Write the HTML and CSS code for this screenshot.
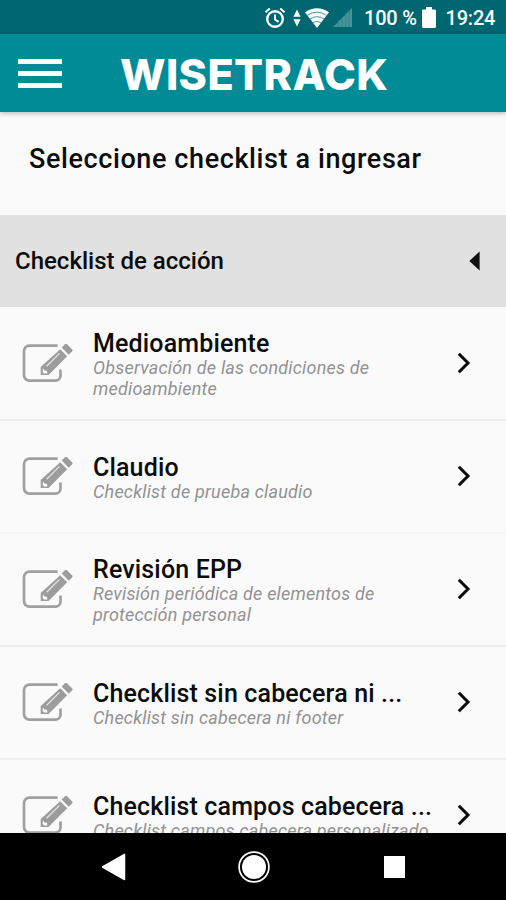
FILE: index.html
```html
<!DOCTYPE html>
<html lang="es">

<head>
    <meta charset="UTF-8">
    <meta name="viewport" content="width=device-width, initial-scale=1.0">
    <title>WISETRACK</title>
    <link rel="stylesheet" href="styles.css">
</head>

<body>
    <!-- icons shared by every row -->
    <svg class="sprite" width="0" height="0">
        <symbol id="icon-edit" viewBox="20 340 54 46">
            <path d="M57.6 345.6H29.5a5.5 5.5 0 0 0-5.5 5.5v24a5.5 5.5 0 0 0 5.5 5.5h26a5 5 0 0 0 5-5v-6.2" fill="none" stroke="#a0a0a0" stroke-width="2.7" />
            <path d="M61.7 347.6l3.4-3.4a1.3 1.3 0 0 1 1.8 0l5.3 5.2a1.3 1.3 0 0 1 0 1.8l-3.5 3.5z" fill="#9c9c9c" />
            <path d="M60.2 349.2l7 7-18.7 18.7h-7.8v-7.8z" fill="#9c9c9c" />
            <path d="M43 368.2l1.4 2.4 2.6.2.4 2.8H44l-1.4-1.5z" fill="#fafafa" />
            <path d="M46.6 366.2l12.9-12.8" fill="none" stroke="#e6e6e6" stroke-width="1.2" />
        </symbol>
        <symbol id="icon-chevron" viewBox="0 0 14 22">
            <path d="M1.8 1.8L11 11l-9.2 9.2" fill="none" stroke="#0a0a0a" stroke-width="3" />
        </symbol>
    </svg>

    <div class="screen">
        <div class="status-bar">
            <svg class="alarm" width="22" height="22" viewBox="0 0 22 22">
                <circle cx="11" cy="12" r="7.8" fill="none" stroke="#fff" stroke-width="2.4" />
                <path d="M11 7.5v5l3.6 2.3M1.4 5.2L5.8 1.5M20.6 5.2L16.2 1.5" fill="none" stroke="#fff" stroke-width="2" />
            </svg>
            <svg class="data" width="8" height="18" viewBox="0 0 8 18">
                <path d="M4 .6l3.6 7.2H.4zM4 17.4l3.6-7.2H.4z" fill="#fff" />
            </svg>
            <svg class="wifi" width="24" height="20" viewBox="0 0 24 20">
                <path d="M0 4.2Q12-3.6 24 4.2L12 20z" fill="#fff" />
                <path d="M2.4 7.2Q12 1.2 21.6 7.2M5 11Q12 6.4 19 11M8 14.6q4-2.6 8 0" fill="none" stroke="#006770" stroke-width=".7" />
            </svg>
            <svg class="signal" width="19" height="19" viewBox="0 0 19 19">
                <path d="M19 0v19H0z" fill="#48949a" />
                <path d="M5.3 12v7M9 9v10M12.7 5v14M16.2 2v17" stroke="#2a8087" stroke-width=".8" />
            </svg>
            <span class="percent">100 %</span>
            <svg class="battery" width="14" height="21" viewBox="0 0 14 21">
                <path d="M4 0h6v2.4h2.5A1.5 1.5 0 0 1 14 4v15.5a1.5 1.5 0 0 1-1.5 1.5h-11A1.5 1.5 0 0 1 0 19.5V4a1.5 1.5 0 0 1 1.5-1.6H4z" fill="#fff" />
            </svg>
            <span class="clock">19:24</span>
        </div>

        <div class="app-bar">
            <div class="menu">
                <span></span>
                <span></span>
                <span></span>
            </div>
            <div class="brand">WISETRACK</div>
        </div>

        <h1 class="page-title">Seleccione checklist a ingresar</h1>

        <div class="section">
            <span class="section-name">Checklist de acción</span>
            <svg width="11" height="20" viewBox="0 0 11 20">
                <path d="M10.6.5v19L.3 10z" fill="#111" />
            </svg>
        </div>

        <div class="list">
            <div class="item">
                <svg class="edit"><use href="#icon-edit" /></svg>
                <div class="text">
                    <div class="name">Medioambiente</div>
                    <div class="desc">Observación de las condiciones de<br>medioambiente</div>
                </div>
                <svg class="chevron"><use href="#icon-chevron" /></svg>
            </div>
            <div class="item light">
                <svg class="edit"><use href="#icon-edit" /></svg>
                <div class="text">
                    <div class="name">Claudio</div>
                    <div class="desc">Checklist de prueba claudio</div>
                </div>
                <svg class="chevron"><use href="#icon-chevron" /></svg>
            </div>
            <div class="item">
                <svg class="edit"><use href="#icon-edit" /></svg>
                <div class="text">
                    <div class="name">Revisión EPP</div>
                    <div class="desc">Revisión periódica de elementos de<br>protección personal</div>
                </div>
                <svg class="chevron"><use href="#icon-chevron" /></svg>
            </div>
            <div class="item">
                <svg class="edit"><use href="#icon-edit" /></svg>
                <div class="text">
                    <div class="name">Checklist sin cabecera ni ...</div>
                    <div class="desc">Checklist sin cabecera ni footer</div>
                </div>
                <svg class="chevron"><use href="#icon-chevron" /></svg>
            </div>
            <div class="item">
                <svg class="edit"><use href="#icon-edit" /></svg>
                <div class="text">
                    <div class="name">Checklist campos cabecera ...</div>
                    <div class="desc">Checklist campos cabecera personalizado</div>
                </div>
                <svg class="chevron"><use href="#icon-chevron" /></svg>
            </div>
        </div>

        <div class="nav-bar">
            <svg class="back" width="25" height="28" viewBox="0 0 25 28">
                <path d="M23.5 1.4v25.2L1.5 14z" fill="#fff" stroke="#fff" stroke-width="1.5" stroke-linejoin="round" />
            </svg>
            <svg class="home" width="32" height="32" viewBox="0 0 32 32">
                <circle cx="16" cy="16" r="14.9" fill="none" stroke="#fff" stroke-width="1.7" />
                <circle cx="16" cy="16" r="12" fill="#fff" />
            </svg>
            <div class="recent"></div>
        </div>
    </div>
</body>

</html>
```
FILE: styles.css
```css
body {
    margin: 0;
    padding: 0;
    background: #fafafa;
    color: #0c0c0c;
    font-family: Roboto, "Liberation Sans", sans-serif;
}

.sprite {
    display: block;
}

.screen {
    display: flex;
    flex-direction: column;
    height: 900px;
    overflow: hidden;
    width: 506px;
}

.status-bar {
    align-items: center;
    background: #006770;
    box-sizing: border-box;
    color: #fff;
    display: flex;
    flex: none;
    font-size: 20px;
    font-weight: 500;
    height: 34px;
    padding-left: 264px;
    padding-top: 1px;
    white-space: nowrap;
}

.status-bar .data {
    margin-left: 7px;
}

.status-bar .wifi {
    margin-left: 4px;
}

.status-bar .signal {
    margin-left: 4px;
}

.percent {
    letter-spacing: -0.2px;
    margin-left: 12px;
    width: 57.5px;
}

.clock {
    letter-spacing: -0.2px;
    margin-left: 10px;
}

.app-bar {
    align-items: center;
    background: #008b96;
    box-shadow: 0 1px 5px rgba(0, 0, 0, 0.3);
    display: flex;
    flex: none;
    height: 78px;
    z-index: 1;
}

.menu {
    display: flex;
    flex-direction: column;
    gap: 7px;
    margin-left: 18px;
    padding-top: 1px;
    width: 44px;
}

.menu span {
    background: #fff;
    height: 5px;
}

.brand {
    color: #fff;
    font-family: Inter, sans-serif;
    font-size: 43px;
    font-weight: 800;
    letter-spacing: 0.4px;
    line-height: 50px;
    margin-left: 58px;
    padding-top: 2px;
}

.page-title {
    flex: none;
    font-size: 27px;
    font-weight: 500;
    height: 103px;
    letter-spacing: 0.6px;
    line-height: 94px;
    margin: 0;
    padding-left: 29px;
    white-space: nowrap;
}

.section {
    align-items: center;
    background: #e1e1e1;
    display: flex;
    flex: none;
    height: 92px;
    justify-content: space-between;
    padding: 0 26px 0 15px;
}

.section-name {
    font-size: 24px;
    font-weight: 500;
}

.list {
    flex: 1;
    overflow: hidden;
    padding-top: 1px;
}

.item {
    align-items: center;
    border-bottom: 2px solid #efefef;
    box-sizing: border-box;
    display: flex;
    height: 113px;
    padding: 0 35px 1px 20px;
}

.item.light {
    border-color: #f6f6f6;
}

.edit {
    flex: none;
    height: 46px;
    width: 54px;
}

.text {
    flex: 1;
    margin-left: 19px;
    padding-top: 3px;
    white-space: nowrap;
}

.name {
    font-size: 25px;
    font-weight: 500;
    letter-spacing: 0.15px;
    line-height: 27px;
}

.desc {
    color: #929292;
    font-size: 18px;
    font-style: italic;
    letter-spacing: 0.2px;
    line-height: 21px;
}

.chevron {
    flex: none;
    height: 22px;
    width: 14px;
}

.nav-bar {
    align-items: center;
    background: #000;
    display: flex;
    flex: none;
    height: 67px;
}

.back {
    margin-left: 101px;
}

.home {
    margin-left: 112px;
}

.recent {
    background: #fff;
    height: 22px;
    margin-left: 114px;
    width: 21px;
}
```
